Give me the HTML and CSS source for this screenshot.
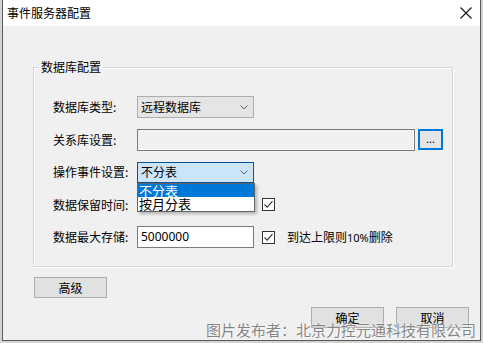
FILE: index.html
```html
<!DOCTYPE html>
<html lang="zh-CN">
<head>
<meta charset="utf-8">
<title>事件服务器配置</title>
<link rel="stylesheet" href="styles.css">
</head>
<body>
<div class="window">
  <div class="titlebar">
    <span class="title">事件服务器配置</span>
    <svg class="close" width="12" height="12" viewBox="0 0 12 12"><path d="M0.5 0.5 L11.5 11.5 M11.5 0.5 L0.5 11.5" stroke="#111" stroke-width="1.1" fill="none"/></svg>
  </div>
  <div class="content">
    <fieldset class="group">
      <legend>数据库配置</legend>
      <div class="rows">
        <div class="row">
          <span class="label">数据库类型:</span>
          <div class="combo"><span>远程数据库</span><svg class="chev" width="8" height="5" viewBox="0 0 8 5"><path d="M0.5 0.5 L4 4 L7.5 0.5" stroke="#606060" fill="none"/></svg></div>
        </div>
        <div class="row">
          <span class="label">关系库设置:</span>
          <div class="input wide"></div>
          <button class="browse">...</button>
        </div>
        <div class="row">
          <span class="label">操作事件设置:</span>
          <div class="combo-wrap">
            <div class="combo open"><span>不分表</span><svg class="chev" width="8" height="5" viewBox="0 0 8 5"><path d="M0.5 0.5 L4 4 L7.5 0.5" stroke="#606060" fill="none"/></svg></div>
            <ul class="dropdown">
              <li class="sel">不分表</li>
              <li>按月分表</li>
            </ul>
          </div>
        </div>
        <div class="row">
          <span class="label">数据保留时间:</span>
          <div class="spacer"></div>
          <span class="check"><svg width="11" height="11" viewBox="0 0 11 11"><path d="M1.5 5.5 L4.2 8.2 L9.5 2.2" stroke="#333" stroke-width="1.1" fill="none"/></svg></span>
        </div>
        <div class="row">
          <span class="label">数据最大存储:</span>
          <div class="input white">5000000</div>
          <span class="check"><svg width="11" height="11" viewBox="0 0 11 11"><path d="M1.5 5.5 L4.2 8.2 L9.5 2.2" stroke="#333" stroke-width="1.1" fill="none"/></svg></span>
          <span class="checktext">到达上限则<span class="num">10%</span>删除</span>
        </div>
      </div>
    </fieldset>
    <div class="adv-row"><button class="btn">高级</button></div>
    <div class="footer">
      <button class="btn">确定</button>
      <button class="btn">取消</button>
    </div>
  </div>
  <div class="watermark">图片发布者：北京力控元通科技有限公司</div>
</div>
</body>
</html>
```

FILE: styles.css
```css
html, body {
  margin: 0;
  padding: 0;
}
body {
  width: 483px;
  height: 343px;
  background: #d4d4d4;
  font-family: "Noto Sans", "Noto Sans CJK SC", sans-serif;
  font-size: 12px;
  color: #000;
  overflow: hidden;
}
.window {
  position: relative;
  margin-left: 2px;
  width: 477px;
  height: 340px;
  border-left: 1px solid #5a5a5a;
  border-right: 1px solid #5a5a5a;
  border-bottom: 1px solid #5a5a5a;
  background: #f0f0f0;
  display: flex;
  flex-direction: column;
}
.titlebar {
  height: 26px;
  background: #fff;
  display: flex;
  align-items: center;
  justify-content: space-between;
  padding-left: 4px;
  flex: none;
}
.title {
  font-family: "Noto Sans CJK SC", sans-serif;
  font-size: 12px;
  line-height: 26px;
}
.close {
  margin-right: 8px;
  display: block;
}
.content {
  display: flex;
  flex-direction: column;
  padding: 0 11px 0 0;
}
.group {
  margin: 33px 0 0 30px;
  width: 418px;
  padding: 0;
  border: 1px solid #d7d7d7;
  box-shadow: inset 1px 1px 0 #fff, 1px 1px 0 #fff;
  min-width: 0;
}
.group legend {
  font-family: "Noto Sans CJK SC", sans-serif;
  font-size: 12px;
  line-height: 16px;
  padding: 0 2px;
  margin-left: 5px;
}
.rows {
  display: flex;
  flex-direction: column;
  gap: 10.5px;
  padding: 21px 0 18px 19px;
}
.row {
  display: flex;
  align-items: center;
  height: 22px;
}
.label {
  width: 84px;
  flex: none;
  font-family: "Noto Sans CJK SC", sans-serif;
  line-height: 16px;
}
.combo {
  box-sizing: border-box;
  width: 117px;
  height: 22px;
  background: #e5e5e5;
  border: 1px solid #adadad;
  display: flex;
  align-items: center;
  justify-content: space-between;
  padding: 0 5px 0 3px;
  font-family: "Noto Sans CJK SC", sans-serif;
  line-height: 16px;
}
.combo.open {
  background: #cce4f7;
  border-color: #005499;
  height: 21px;
}
.chev {
  display: block;
}
.combo-wrap {
  position: relative;
  width: 117px;
}
.dropdown {
  position: absolute;
  left: 0;
  top: 21px;
  width: 118px;
  box-sizing: border-box;
  margin: 0;
  padding: 0;
  list-style: none;
  background: #fff;
  border: 1px solid #646464;
  box-shadow: 2px 2px 3px rgba(0,0,0,0.25);
  z-index: 2;
}
.dropdown li {
  height: 13.5px;
  line-height: 13px;
  padding-left: 1px;
  font-family: "Noto Sans CJK SC", sans-serif;
  font-size: 13px;
}
.dropdown li.sel {
  background: #0078d7;
  color: #fff;
}
.input {
  box-sizing: border-box;
  width: 117px;
  height: 22px;
  border: 1px solid #7a7a7a;
  background: #f0f0f0;
  padding-left: 3px;
  line-height: 20px;
}
.input.wide {
  width: 278px;
  box-shadow: inset -1px -1px 0 #fff;
}
.input.white {
  background: #fff;
  font-size: 12px;
}
.spacer {
  width: 117px;
  height: 22px;
}
.browse {
  margin-left: 3px;
  width: 25px;
  height: 21px;
  box-sizing: border-box;
  border: 2px solid #0078d7;
  background: #e5e5e5;
  padding: 0;
  font-family: "Noto Sans", sans-serif;
  font-size: 11px;
  line-height: 14px;
  color: #000;
  align-self: flex-start;
}
.check {
  margin-left: 8px;
  box-sizing: border-box;
  width: 13px;
  height: 13px;
  border: 1px solid #333;
  background: #fff;
  display: flex;
  align-items: center;
  justify-content: center;
}
.check svg {
  display: block;
}
.checktext {
  margin-left: 12px;
  font-family: "Noto Sans CJK SC", sans-serif;
  line-height: 16px;
}
.checktext .num {
  font-family: "Noto Sans", sans-serif;
  font-size: 11px;
}
.btn {
  box-sizing: border-box;
  width: 73px;
  height: 21px;
  border: 1px solid #adadad;
  background: #e1e1e1;
  padding: 0;
  font-family: "Noto Sans CJK SC", sans-serif;
  font-size: 12px;
  color: #000;
  line-height: 16px;
}
.adv-row {
  display: flex;
  margin: 10px 0 0 31px;
}
.footer {
  display: flex;
  justify-content: flex-end;
  gap: 12px;
  margin-top: 9px;
}
.watermark {
  position: absolute;
  right: 4px;
  bottom: 0;
  font-family: "Noto Sans CJK SC", sans-serif;
  font-size: 15px;
  line-height: 20px;
  color: #858585;
  text-shadow: 0 0 1px #fff, 0 0 2px #fff;
  white-space: nowrap;
  z-index: 3;
}
```
